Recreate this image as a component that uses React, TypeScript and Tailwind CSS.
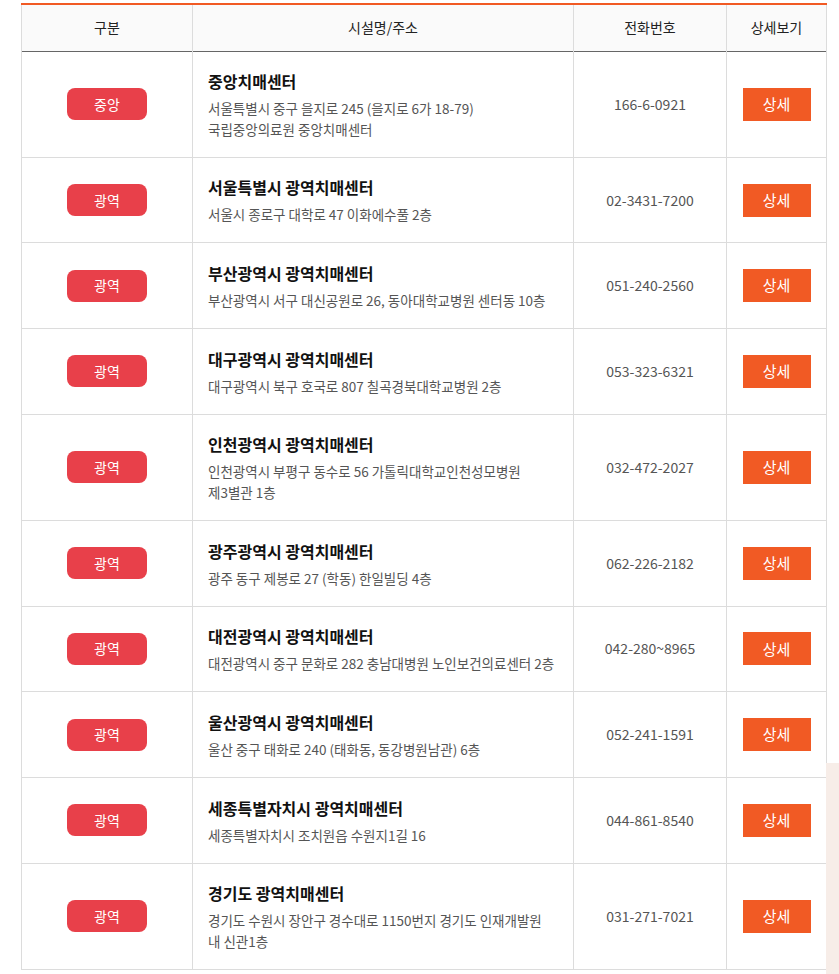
const rows = [
  { type: "중앙", name: "중앙치매센터", addr: ["서울특별시 중구 을지로 245 (을지로 6가 18-79)", "국립중앙의료원 중앙치매센터"], tel: "166-6-0921" },
  { type: "광역", name: "서울특별시 광역치매센터", addr: ["서울시 종로구 대학로 47 이화에수풀 2층"], tel: "02-3431-7200" },
  { type: "광역", name: "부산광역시 광역치매센터", addr: ["부산광역시 서구 대신공원로 26, 동아대학교병원 센터동 10층"], tel: "051-240-2560" },
  { type: "광역", name: "대구광역시 광역치매센터", addr: ["대구광역시 북구 호국로 807 칠곡경북대학교병원 2층"], tel: "053-323-6321" },
  { type: "광역", name: "인천광역시 광역치매센터", addr: ["인천광역시 부평구 동수로 56 가톨릭대학교인천성모병원", "제3별관 1층"], tel: "032-472-2027" },
  { type: "광역", name: "광주광역시 광역치매센터", addr: ["광주 동구 제봉로 27 (학동) 한일빌딩 4층"], tel: "062-226-2182" },
  { type: "광역", name: "대전광역시 광역치매센터", addr: ["대전광역시 중구 문화로 282 충남대병원 노인보건의료센터 2층"], tel: "042-280~8965" },
  { type: "광역", name: "울산광역시 광역치매센터", addr: ["울산 중구 태화로 240 (태화동, 동강병원남관) 6층"], tel: "052-241-1591" },
  { type: "광역", name: "세종특별자치시 광역치매센터", addr: ["세종특별자치시 조치원읍 수원지1길 16"], tel: "044-861-8540" },
  { type: "광역", name: "경기도 광역치매센터", addr: ["경기도 수원시 장안구 경수대로 1150번지 경기도 인재개발원", "내 신관1층"], tel: "031-271-7021" },
];

export default function App() {
  return (
    <div className="relative min-h-[974px] bg-white font-['Noto_Sans_CJK_KR','Noto_Sans',sans-serif]">
      <div className="pl-[21px] pt-[3px]">
        <table className="w-[805px] table-fixed border-collapse border-t-2 border-[#f15a24]">
          <colgroup>
            <col className="w-[171px]" />
            <col className="w-[381px]" />
            <col className="w-[153px]" />
            <col className="w-[100px]" />
          </colgroup>
          <thead>
            <tr className="h-[47px] bg-[#fafafa] border-b border-[#666] text-[14px] text-[#222]">
              <th className="border-x border-[#dcdcdc] font-normal">구분</th>
              <th className="border-x border-[#dcdcdc] font-normal">시설명/주소</th>
              <th className="border-x border-[#dcdcdc] font-normal">전화번호</th>
              <th className="border-x border-[#dcdcdc] font-normal">상세보기</th>
            </tr>
          </thead>
          <tbody>
            {rows.map((r, i) => (
              <tr key={i} className="border-b border-[#dcdcdc]">
                <td className="border-x border-[#dcdcdc] text-center align-middle">
                  <span className="inline-flex h-[32px] w-[80px] items-center justify-center rounded-[8px] bg-[#e8404a] text-[14px] text-white">
                    {r.type}
                  </span>
                </td>
                <td className="border-x border-[#dcdcdc] px-[15px] py-[17.6px] align-middle">
                  <div className="text-[16px] leading-[24px] font-bold text-[#111]">{r.name}</div>
                  <div className="mt-[5px] text-[13.5px] leading-[20.5px] text-[#555]">
                    {r.addr.map((a, j) => (
                      <div key={j}>{a}</div>
                    ))}
                  </div>
                </td>
                <td className="border-x border-[#dcdcdc] text-center align-middle text-[14px] text-[#555]">{r.tel}</td>
                <td className="border-x border-[#dcdcdc] text-center align-middle">
                  <span className="inline-flex h-[33px] w-[68px] items-center justify-center bg-[#f15a24] text-[15px] text-white">
                    상세
                  </span>
                </td>
              </tr>
            ))}
          </tbody>
        </table>
      </div>
      <div className="absolute left-[826px] top-[763px] h-[211px] w-[13px] bg-[#f7ede8]" />
    </div>
  );
}
